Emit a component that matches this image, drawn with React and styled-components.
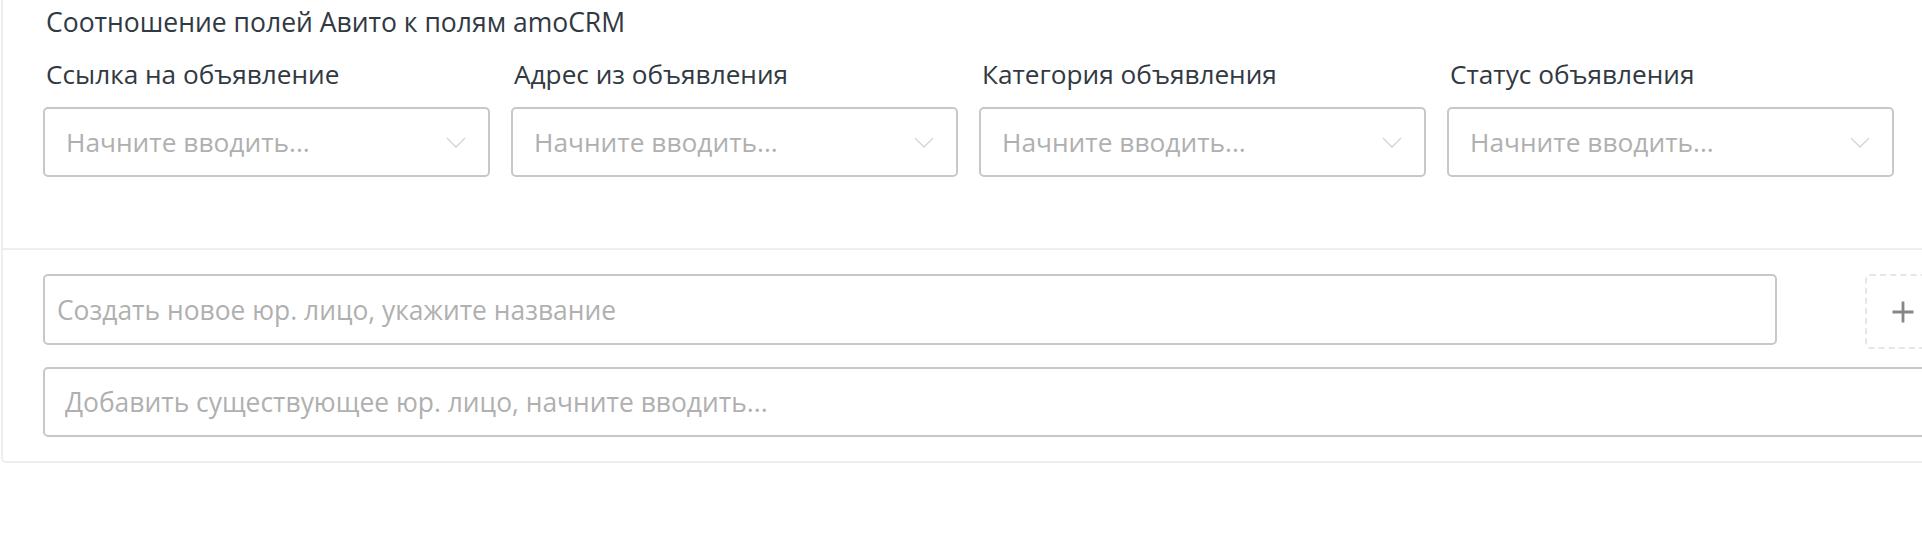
import React from "react"
import styled, { createGlobalStyle } from 'styled-components'

const GlobalStyle = createGlobalStyle`
  html, body {
    margin: 0;
    padding: 0;
    background: #fff;
    overflow: hidden;
  }
  body {
    font-family: "Open Sans", "Noto Sans", sans-serif;
    color: #313942;
  }
`

const Card = styled.div`
  box-sizing: border-box;
  width: 1981px;
  margin-left: 1px;
  background: #fff;
  border: 2px solid #ededf2;
  border-top: none;
  border-radius: 0 0 5px 5px;
`
const MappingSection = styled.section`
  padding: 4px 40px 71px;
`
const Title = styled.div`
  margin-left: 3px;
  font-size: 26.5px;
  line-height: 36px;
  color: #313942;
`
const FieldsGrid = styled.div`
  display: grid;
  grid-template-columns: repeat(4, 447px);
  column-gap: 21px;
  margin-top: 16px;
`
const Field = styled.div`
  display: flex;
  flex-direction: column;
`
const Label = styled.div`
  margin: 0 0 15px 3px;
  font-size: 26.2px;
  line-height: 36px;
  color: #313942;
  white-space: nowrap;
`
const Select = styled.div`
  box-sizing: border-box;
  height: 70px;
  display: flex;
  align-items: center;
  justify-content: space-between;
  padding: 0 22px 0 21px;
  border: 2px solid #c8c8c8;
  border-radius: 5px;
  background: #fff;
`
const Placeholder = styled.span`
  font-size: 26.3px;
  color: #b0b0b0;
`
const Chevron = styled.svg`
  width: 20px;
  height: 11px;
  flex-shrink: 0;
`
const LegalSection = styled.section`
  display: grid;
  grid-template-columns: 1fr 75px;
  column-gap: 88px;
  row-gap: 18px;
  align-items: start;
  padding: 24px 40px 24px;
  border-top: 2px solid #ededf2;
`
const Input = styled.input`
  box-sizing: border-box;
  width: 100%;
  height: ${p => p.$height || 70}px;
  padding: 0 0 0 ${p => p.$pad}px;
  grid-column: ${p => p.$full ? '1 / -1' : 'auto'};
  border: 2px solid #c8c8c8;
  border-radius: 5px;
  font-family: "Open Sans", "Noto Sans", sans-serif;
  font-size: 26.4px;
  color: #313942;
  background: #fff;
  outline: none;

  &::placeholder {
    color: #b0b0b0;
  }
`
const AddButton = styled.button`
  box-sizing: border-box;
  width: 75px;
  height: 75px;
  display: flex;
  align-items: center;
  justify-content: center;
  padding: 0;
  border: 2px dashed #e6e6e6;
  border-radius: 5px;
  background: #fff;
  cursor: pointer;
`

const fields = [
  'Ссылка на объявление',
  'Адрес из объявления',
  'Категория объявления',
  'Статус объявления'
]

function ChevronDown() {
  return (
    <Chevron viewBox="0 0 20 11" fill="none">
      <polyline points="1,1 10,10 19,1" stroke="#d3d3d9" strokeWidth="1.3" />
    </Chevron>
  )
}

function PlusIcon() {
  return (
    <svg width="22" height="22" viewBox="0 0 22 22">
      <path d="M11 0.5 V21.5 M0.5 11 H21.5" stroke="#868686" strokeWidth="2.8" />
    </svg>
  )
}

export default function App() {
  return (
    <>
      <GlobalStyle />
      <Card>
        <MappingSection>
          <Title>Соотношение полей Авито к полям amoCRM</Title>
          <FieldsGrid>
            {fields.map(name => (
              <Field key={name}>
                <Label>{name}</Label>
                <Select>
                  <Placeholder>Начните вводить...</Placeholder>
                  <ChevronDown />
                </Select>
              </Field>
            ))}
          </FieldsGrid>
        </MappingSection>
        <LegalSection>
          <Input $pad={12} $height={71} placeholder="Создать новое юр. лицо, укажите название" />
          <AddButton type="button">
            <PlusIcon />
          </AddButton>
          <Input $pad={20} $full placeholder="Добавить существующее юр. лицо, начните вводить..." />
        </LegalSection>
      </Card>
    </>
  )
}
